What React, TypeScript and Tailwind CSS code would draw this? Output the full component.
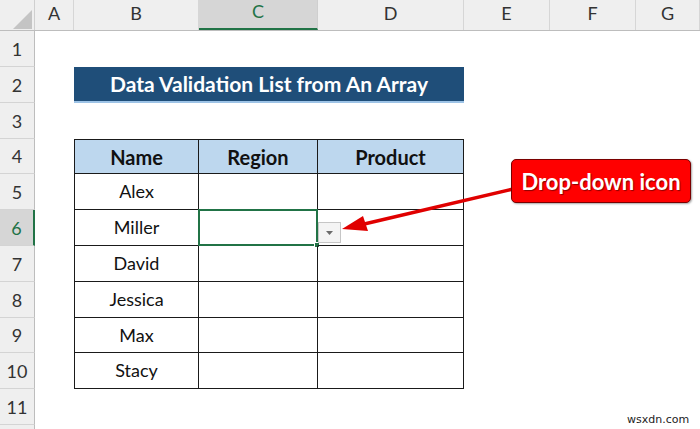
import React from "react";

const COLS = [
  { key: "A", w: "w-[39px]" },
  { key: "B", w: "w-[125px]" },
  { key: "C", w: "w-[119px]" },
  { key: "D", w: "w-[146px]" },
  { key: "E", w: "w-[86px]" },
  { key: "F", w: "w-[86px]" },
  { key: "G", w: "flex-1" },
];

// row heights follow the sheet (a few rows are 1px shorter)
const ROW_H: Record<number, string> = {
  1: "h-[36px]", 2: "h-[36px]", 3: "h-[36px]", 4: "h-[35px]", 5: "h-[36px]", 6: "h-[36px]",
  7: "h-[36px]", 8: "h-[36px]", 9: "h-[35px]", 10: "h-[36px]", 11: "h-[36px]", 12: "h-[36px]",
};

const NAMES: Record<number, string> = { 5: "Alex", 6: "Miller", 7: "David", 8: "Jessica", 9: "Max", 10: "Stacy" };

const font = "font-['Lato','Liberation_Sans',sans-serif]";

function ColumnHeader() {
  return (
    <div className="flex h-[31px] bg-[#efefef] border-b border-[#bdbdbd]">
      <div className="w-[35px] shrink-0 relative border-r border-[#cfcfcf]">
        <svg className="absolute left-[13px] top-[10px]" width="20" height="19" viewBox="0 0 20 19">
          <polygon points="19,0 19,19 0,19" fill="#c4c4c4" />
        </svg>
      </div>
      {COLS.map((c) => (
        <div
          key={c.key}
          className={`${c.w} shrink-0 flex items-end justify-center pb-[3px] text-[18px] ${
            c.key === "C"
              ? "bg-[#d6d6d6] text-[#217346] border-b-2 border-[#217346] border-r border-r-[#cfcfcf]"
              : "text-[#333] border-r border-[#d6d6d6]"
          }`}
        >
          {c.key}
        </div>
      ))}
    </div>
  );
}

function RowHeader({ n }: { n: number }) {
  const active = n === 6;
  return (
    <div
      className={`w-[35px] shrink-0 flex items-end justify-center pb-[3px] text-[18px] border-b border-[#d4d4d4] ${
        active ? "bg-[#d6d6d6] text-[#217346] border-r-2 border-r-[#217346]" : "bg-[#efefef] text-[#333] border-r border-r-[#bdbdbd]"
      }`}
    >
      {n < 12 ? n : null}
    </div>
  );
}

function TitleRow() {
  return (
    <>
      <div className="w-[39px] shrink-0" />
      <div className="w-[390px] shrink-0 flex flex-col">
        <div className="flex-1 bg-[#1f4e79] flex items-center justify-center text-white font-bold text-[21px]">
          Data Validation List from An Array
        </div>
        <div className="h-[2px] bg-[#9dc3e6]" />
      </div>
    </>
  );
}

function TableRow({ n }: { n: number }) {
  const head = n === 4;
  const cell = `shrink-0 flex items-center justify-center border-b border-r border-[#1a1a1a] ${head ? "bg-[#bdd7ee] font-bold text-[20px] border-t" : "text-[18px]"}`;
  return (
    <>
      <div className="w-[39px] shrink-0" />
      <div className={`w-[125px] border-l ${cell}`}>{head ? "Name" : NAMES[n]}</div>
      <div className={`w-[119px] relative ${cell}`}>
        {head ? "Region" : null}
        {n === 6 && (
          <div className="absolute -left-[1px] -top-[1px] -right-[1px] -bottom-[1px] border-2 border-[#217346]">
            <div className="absolute -right-[4px] -bottom-[4px] w-[6px] h-[6px] bg-[#217346] border border-white" />
          </div>
        )}
      </div>
      <div className={`w-[146px] relative ${cell}`}>
        {head ? "Product" : null}
        {n === 6 && (
          <div className="absolute left-0 top-[12px] w-[23px] h-[21px] bg-[#f4f4f4] border border-[#c6c6c6] flex items-center justify-center">
            <svg width="7" height="4" viewBox="0 0 7 4">
              <polygon points="0,0 7,0 3.5,4" fill="#6b6b6b" />
            </svg>
          </div>
        )}
      </div>
    </>
  );
}

export default function App() {
  const rows = [1, 2, 3, 4, 5, 6, 7, 8, 9, 10, 11, 12];
  return (
    <div className={`relative w-[700px] h-[429px] overflow-hidden bg-white text-[#111] ${font}`}>
      <ColumnHeader />
      {rows.map((n) => (
        <div key={n} className={`flex ${ROW_H[n]}`}>
          <RowHeader n={n} />
          {n === 2 && <TitleRow />}
          {n >= 4 && n <= 10 && <TableRow n={n} />}
        </div>
      ))}

      {/* callout + arrow */}
      <svg className="absolute inset-0 pointer-events-none" width="700" height="429" viewBox="0 0 700 429">
        <line x1="513" y1="189" x2="360" y2="225" stroke="#e00000" strokeWidth="3.5" />
        <polygon points="342,229 368,231 363,216" fill="#e00000" />
      </svg>
      <div className="absolute left-[511px] top-[159px] w-[180px] h-[44px] rounded-[5px] bg-[#ff0000] border border-[#7a0000] shadow-[1px_1px_2px_rgba(0,0,0,0.35)] flex items-center justify-center text-white font-bold text-[22px] [text-shadow:1px_1px_1px_rgba(60,0,0,0.6)]">
        Drop-down icon
      </div>
      <div className="absolute left-[627px] top-[412px] text-[11px] text-[#222] font-['DejaVu_Sans',sans-serif]">wsxdn.com</div>
    </div>
  );
}
